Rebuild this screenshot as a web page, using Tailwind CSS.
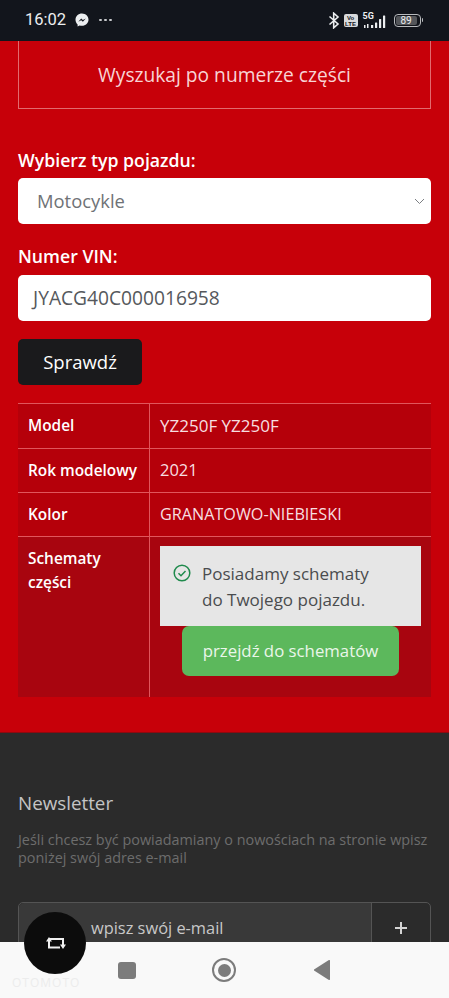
<!DOCTYPE html>
<html lang="pl">
<head>
    <meta charset="UTF-8">
    <meta name="viewport" content="width=device-width, initial-scale=1.0">
    <title>Numer VIN</title>
    <script src="https://cdn.jsdelivr.net/npm/@tailwindcss/browser@4"></script>
</head>
<body class="bg-[#2b2b2b] font-['Open_Sans','Liberation_Sans',sans-serif]">
    <div class="relative w-[449px] h-[998px] flex flex-col overflow-hidden">

        <!-- status bar -->
        <div class="h-[41px] shrink-0 bg-[#12151c] flex items-center justify-between pl-[25px] pr-[26px] pb-[1px] text-[#eceef0]">
            <div class="flex items-center">
                <span class="text-[16.500px] font-['Roboto',sans-serif] leading-none">16:02</span>
                <svg class="ml-[9px]" width="14" height="14" viewBox="0 0 14 14">
                    <path d="M7 .6C3.3.6.5 3.3.5 6.8c0 1.9.8 3.500 2.100 4.600v2.200l2-1.100c.7.2 1.500.3 2.400.3 3.700 0 6.500-2.700 6.500-6S10.700.6 7 .6z" fill="#eceef0"/>
                    <path d="M3.300 8.800 6.200 5.400l1.700 1.500 2.900-1.500-2.900 3.400-1.700-1.600z" fill="#12151c"/>
                </svg>
                <span class="ml-[10px] flex gap-[2.500px]">
                    <i class="w-[2.500px] h-[2.500px] rounded-full bg-[#c8cacd]"></i>
                    <i class="w-[2.500px] h-[2.500px] rounded-full bg-[#c8cacd]"></i>
                    <i class="w-[2.500px] h-[2.500px] rounded-full bg-[#c8cacd]"></i>
                </span>
            </div>
            <div class="flex items-center">
                <svg width="12" height="17" viewBox="0 0 12 17" fill="none" stroke="#eceef0" stroke-width="1.600">
                    <path d="M1.500 4.500 10 12l-4.300 3.800V1.200L10 5l-8.500 7.500"/>
                </svg>
                <div class="ml-[4px] w-[14px] h-[13px] rounded-[2px] bg-[#d8dadc] text-[#12151c] text-[6px] font-bold leading-[6px] text-center pt-[1px] font-['Liberation_Sans',sans-serif]">Vo<br>LTE</div>
                <div class="ml-[5px] w-[27px] h-[17px] relative">
                    <span class="absolute left-0 top-[-1px] text-[9px] font-bold leading-[10px] font-['Roboto',sans-serif]">5G</span>
                    <svg class="absolute left-0 top-0" width="27" height="17" viewBox="0 0 27 17" fill="#eceef0">
                        <rect x="1" y="13" width="1.500" height="3"/><rect x="4" y="12" width="1.500" height="4"/>
                        <rect x="8" y="13" width="2.200" height="3"/><rect x="12" y="10.500" width="2.200" height="5.500" rx=".5"/>
                        <rect x="16" y="7" width="2.200" height="9" rx=".5"/><rect x="20" y="3.500" width="2.200" height="12.500" rx=".5"/>
                    </svg>
                </div>
                <div class="ml-[4px] flex items-center">
                    <div class="w-[27px] h-[13px] rounded-[4px] border border-[#b8babd] p-[1px] flex">
                        <div class="w-[21px] h-full rounded-[2px] bg-[#54565a] text-[10px] leading-[9px] text-center text-[#eceef0] font-['Roboto',sans-serif]">89</div>
                    </div>
                    <i class="ml-[1px] w-[1.500px] h-[4px] bg-[#b8babd] rounded-r-sm"></i>
                </div>
            </div>
        </div>

        <!-- red section -->
        <main class="h-[692px] shrink-0 bg-[#c70009] px-[18px] border-b border-[#8c0a10]">
            <div class="h-[68px] pt-[2px] border border-t-0 border-[#e26a6e] flex items-center justify-center text-[#f8d4d5] text-[19.200px]">
                Wyszukaj po numerze części
            </div>

            <label class="block mt-[39px] text-white text-[17.700px] font-semibold leading-[24px]">Wybierz typ pojazdu:</label>
            <div class="mt-[6px] h-[46px] bg-white rounded-[5px] flex items-center justify-between pl-[19px] pr-[6px] text-[#6f7276] text-[18.400px]">
                <span>Motocykle</span>
                <svg width="11" height="7" viewBox="0 0 11 7" fill="none" stroke="#7b7e82" stroke-width="1"><path d="M1 1l4.500 4.500L10 1"/></svg>
            </div>

            <label class="block mt-[20px] text-white text-[17.700px] font-semibold leading-[24px]">Numer VIN:</label>
            <div class="mt-[7px] h-[46px] bg-white rounded-[5px] flex items-center pl-[15px] text-[#55585c] text-[19.200px]">JYACG40C000016958</div>

            <button class="mt-[18px] block w-[124px] h-[46px] bg-[#1a1a1c] rounded-[5px] text-white text-[18.500px]">Sprawdź</button>

            <!-- results -->
            <div class="mt-[18px] border-t border-[#e0565c] text-white text-[15.400px]">
                <div class="h-[45px] flex items-center bg-[#b5000a] border-b border-[#e0565c]">
                    <div class="w-[132px] h-full shrink-0 flex items-center pl-[10px] font-semibold border-r border-[#e0565c]">Model</div>
                    <div class="pl-[10px] text-[17px] text-[#f7dfe0]">YZ250F YZ250F</div>
                </div>
                <div class="h-[44px] flex items-center bg-[#b5000a] border-b border-[#e0565c]">
                    <div class="w-[132px] h-full shrink-0 flex items-center pl-[10px] font-semibold border-r border-[#e0565c] whitespace-nowrap">Rok modelowy</div>
                    <div class="pl-[10px] text-[16.500px] text-[#f7dfe0]">2021</div>
                </div>
                <div class="h-[44px] flex items-center bg-[#b5000a] border-b border-[#e0565c]">
                    <div class="w-[132px] h-full shrink-0 flex items-center pl-[10px] font-semibold border-r border-[#e0565c]">Kolor</div>
                    <div class="pl-[10px] text-[16.200px] text-[#f7dfe0]">GRANATOWO-NIEBIESKI</div>
                </div>
                <div class="h-[160px] flex bg-[#a8050f]">
                    <div class="w-[132px] shrink-0 pl-[10px] pt-[10px] font-semibold leading-[24px] border-r border-[#e0565c]">Schematy<br>części</div>
                    <div class="flex-1 pl-[10px] pr-[10px] pt-[9px]">
                        <div class="h-[80px] bg-[#e6e6e6] flex items-start pl-[13px] pt-[15px] text-[#4a4c4e] text-[17px] leading-[25.500px]">
                            <svg class="mt-[3px] shrink-0" width="18" height="18" viewBox="0 0 18 18" fill="none" stroke="#1f8a4c" stroke-width="1.500">
                                <circle cx="9" cy="9" r="7.800"/><path d="M5.500 9.200l2.500 2.500 4.500-4.700"/>
                            </svg>
                            <p class="ml-[11px]">Posiadamy schematy<br>do Twojego pojazdu.</p>
                        </div>
                        <button class="block mx-auto w-[217px] h-[50px] bg-[#5cb85c] rounded-[7px] text-[#eaf6ea] text-[16.800px]">przejdź do schematów</button>
                    </div>
                </div>
            </div>
        </main>

        <!-- footer -->
        <footer class="flex-1 min-h-0 overflow-hidden bg-[#2b2b2b] px-[18px]">
            <h2 class="mt-[58px] text-[#c4c4c4] text-[18.800px] leading-[24px]">Newsletter</h2>
            <p class="mt-[16px] text-[#6d6d6d] text-[14.400px] leading-[18px] whitespace-nowrap">Jeśli chcesz być powiadamiany o nowościach na stronie wpisz<br>poniżej swój adres e-mail</p>
            <div class="mt-[35px] h-[60px] flex border border-[#545454] rounded-[5px] text-[#c8c8c8]">
                <div class="flex-1 bg-[#393939] rounded-l-[5px] pl-[72px] pt-[13px] text-[16.400px] leading-[24px]">wpisz swój e-mail</div>
                <div class="w-[59px] border-l border-[#545454] flex justify-center items-start pt-[19px]">
                    <svg width="12" height="12" viewBox="0 0 12 12" stroke="#d4d4d4" stroke-width="2"><path d="M6 0v12M0 6h12"/></svg>
                </div>
            </div>
        </footer>

        <!-- nav bar -->
        <nav class="h-[56px] shrink-0 bg-[#f9f9f9] flex items-center pl-[118px]">
            <div class="w-[18px] h-[17px] rounded-[3px] bg-[#7c7c7c]"></div>
            <div class="ml-[76px] w-[24px] h-[24px] rounded-full border-[2.500px] border-[#7c7c7c] flex items-center justify-center">
                <div class="w-[13px] h-[13px] rounded-full bg-[#7c7c7c]"></div>
            </div>
            <svg class="ml-[77px]" width="18" height="20" viewBox="0 0 18 20"><path d="M17 1v18a1 1 0 0 1-1.500.8L1 10.500V9.500L15.500.2A1 1 0 0 1 17 1z" fill="#7c7c7c"/></svg>
        </nav>

        <!-- floating repost button -->
        <div class="absolute left-[24px] top-[912px] w-[62px] h-[62px] rounded-full bg-[#0c0c0c] flex items-center justify-center">
            <svg class="ml-[2px]" width="20" height="12" viewBox="0 0 20 12" fill="none" stroke="#f0f0f0" stroke-width="2">
                <path d="M3 4v6.500h11"/>
                <path d="M3 2h14v7"/>
                <path d="M0 4.500 3 0l3 4.500zM14 7.500h6L17 12z" fill="#f0f0f0" stroke="none"/>
            </svg>
        </div>

        <!-- watermark -->
        <span class="absolute left-[12px] top-[975px] text-[#ececec] text-[12px] leading-[16px] tracking-[1px]">OTOMOTO</span>
    </div>
</body>
</html>
